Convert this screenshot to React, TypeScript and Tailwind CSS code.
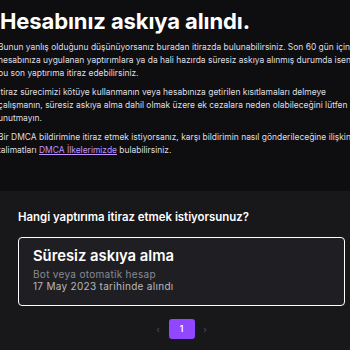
import React from 'react';

const App: React.FC = () => {
    return (
        <div className="w-[350px] h-[350px] overflow-hidden bg-[#18181b] font-['Inter','Liberation_Sans',sans-serif] text-[#efeff1]">
            {/* Top: explanation */}
            <div className="bg-[#0e0e10] pt-[8px] pb-[34px] pl-0 ml-[-2px] w-[372px]">
                <h1 className="text-[22px] leading-[26px] font-bold tracking-[-0.1px] text-white ml-[2px]">
                    Hesabınız askıya alındı.
                </h1>
                <div className="mt-[7px] text-[8.45px] leading-[13px] text-[#dedee3] whitespace-nowrap">
                    <p>Bunun yanlış olduğunu düşünüyorsanız buradan itirazda bulunabilirsiniz. Son 60 gün için</p>
                    <p>hesabınıza uygulanan yaptırımlara ya da hali hazırda süresiz askıya alınmış durumda iseniz</p>
                    <p>bu son yaptırıma itiraz edebilirsiniz.</p>
                </div>
                <div className="mt-[6px] text-[8.45px] leading-[13px] text-[#dedee3] whitespace-nowrap">
                    <p>İtiraz sürecimizi kötüye kullanmanın veya hesabınıza getirilen kısıtlamaları delmeye</p>
                    <p>çalışmanın, süresiz askıya alma dahil olmak üzere ek cezalara neden olabileceğini lütfen</p>
                    <p>unutmayın.</p>
                </div>
                <div className="mt-[6px] text-[8.45px] leading-[13px] text-[#dedee3] whitespace-nowrap">
                    <p>Bir DMCA bildirimine itiraz etmek istiyorsanız, karşı bildirimin nasıl gönderileceğine ilişkin</p>
                    <p>
                        talimatları{' '}
                        <a href="#" className="text-[#bf94ff] underline">DMCA İlkelerimizde</a>{' '}
                        bulabilirsiniz.
                    </p>
                </div>
            </div>

            {/* Bottom: appeal picker */}
            <div className="pt-[18px] pl-[18px] pr-[5px]">
                <h2 className="text-[11.4px] leading-[16px] font-semibold text-white">
                    Hangi yaptırıma itiraz etmek istiyorsunuz?
                </h2>
                <div className="mt-[12px] h-[69px] rounded-[4px] border-[1.5px] border-white bg-[#1f1f23] px-[14px] pt-[8px]">
                    <div className="text-[14.8px] leading-[20px] font-semibold text-white">Süresiz askıya alma</div>
                    <div className="mt-[3px] text-[10px] leading-[11px] tracking-[0.3px] text-[#8a8a92]">Bot veya otomatik hesap</div>
                    <div className="text-[10px] leading-[12px] tracking-[0.3px] text-[#b8b8bf]">17 May 2023 tarihinde alındı</div>
                </div>

                <div className="mt-[13px] flex items-center justify-center gap-[9px]">
                    <span className="text-[8px] text-[#5c5c63]">‹</span>
                    <button className="w-[26px] h-[20px] rounded-[3px] bg-[#9147ff] text-white text-[8.5px] font-semibold flex items-center justify-center">
                        1
                    </button>
                    <span className="text-[8px] text-[#5c5c63]">›</span>
                </div>
            </div>
        </div>
    );
};

export default App;
